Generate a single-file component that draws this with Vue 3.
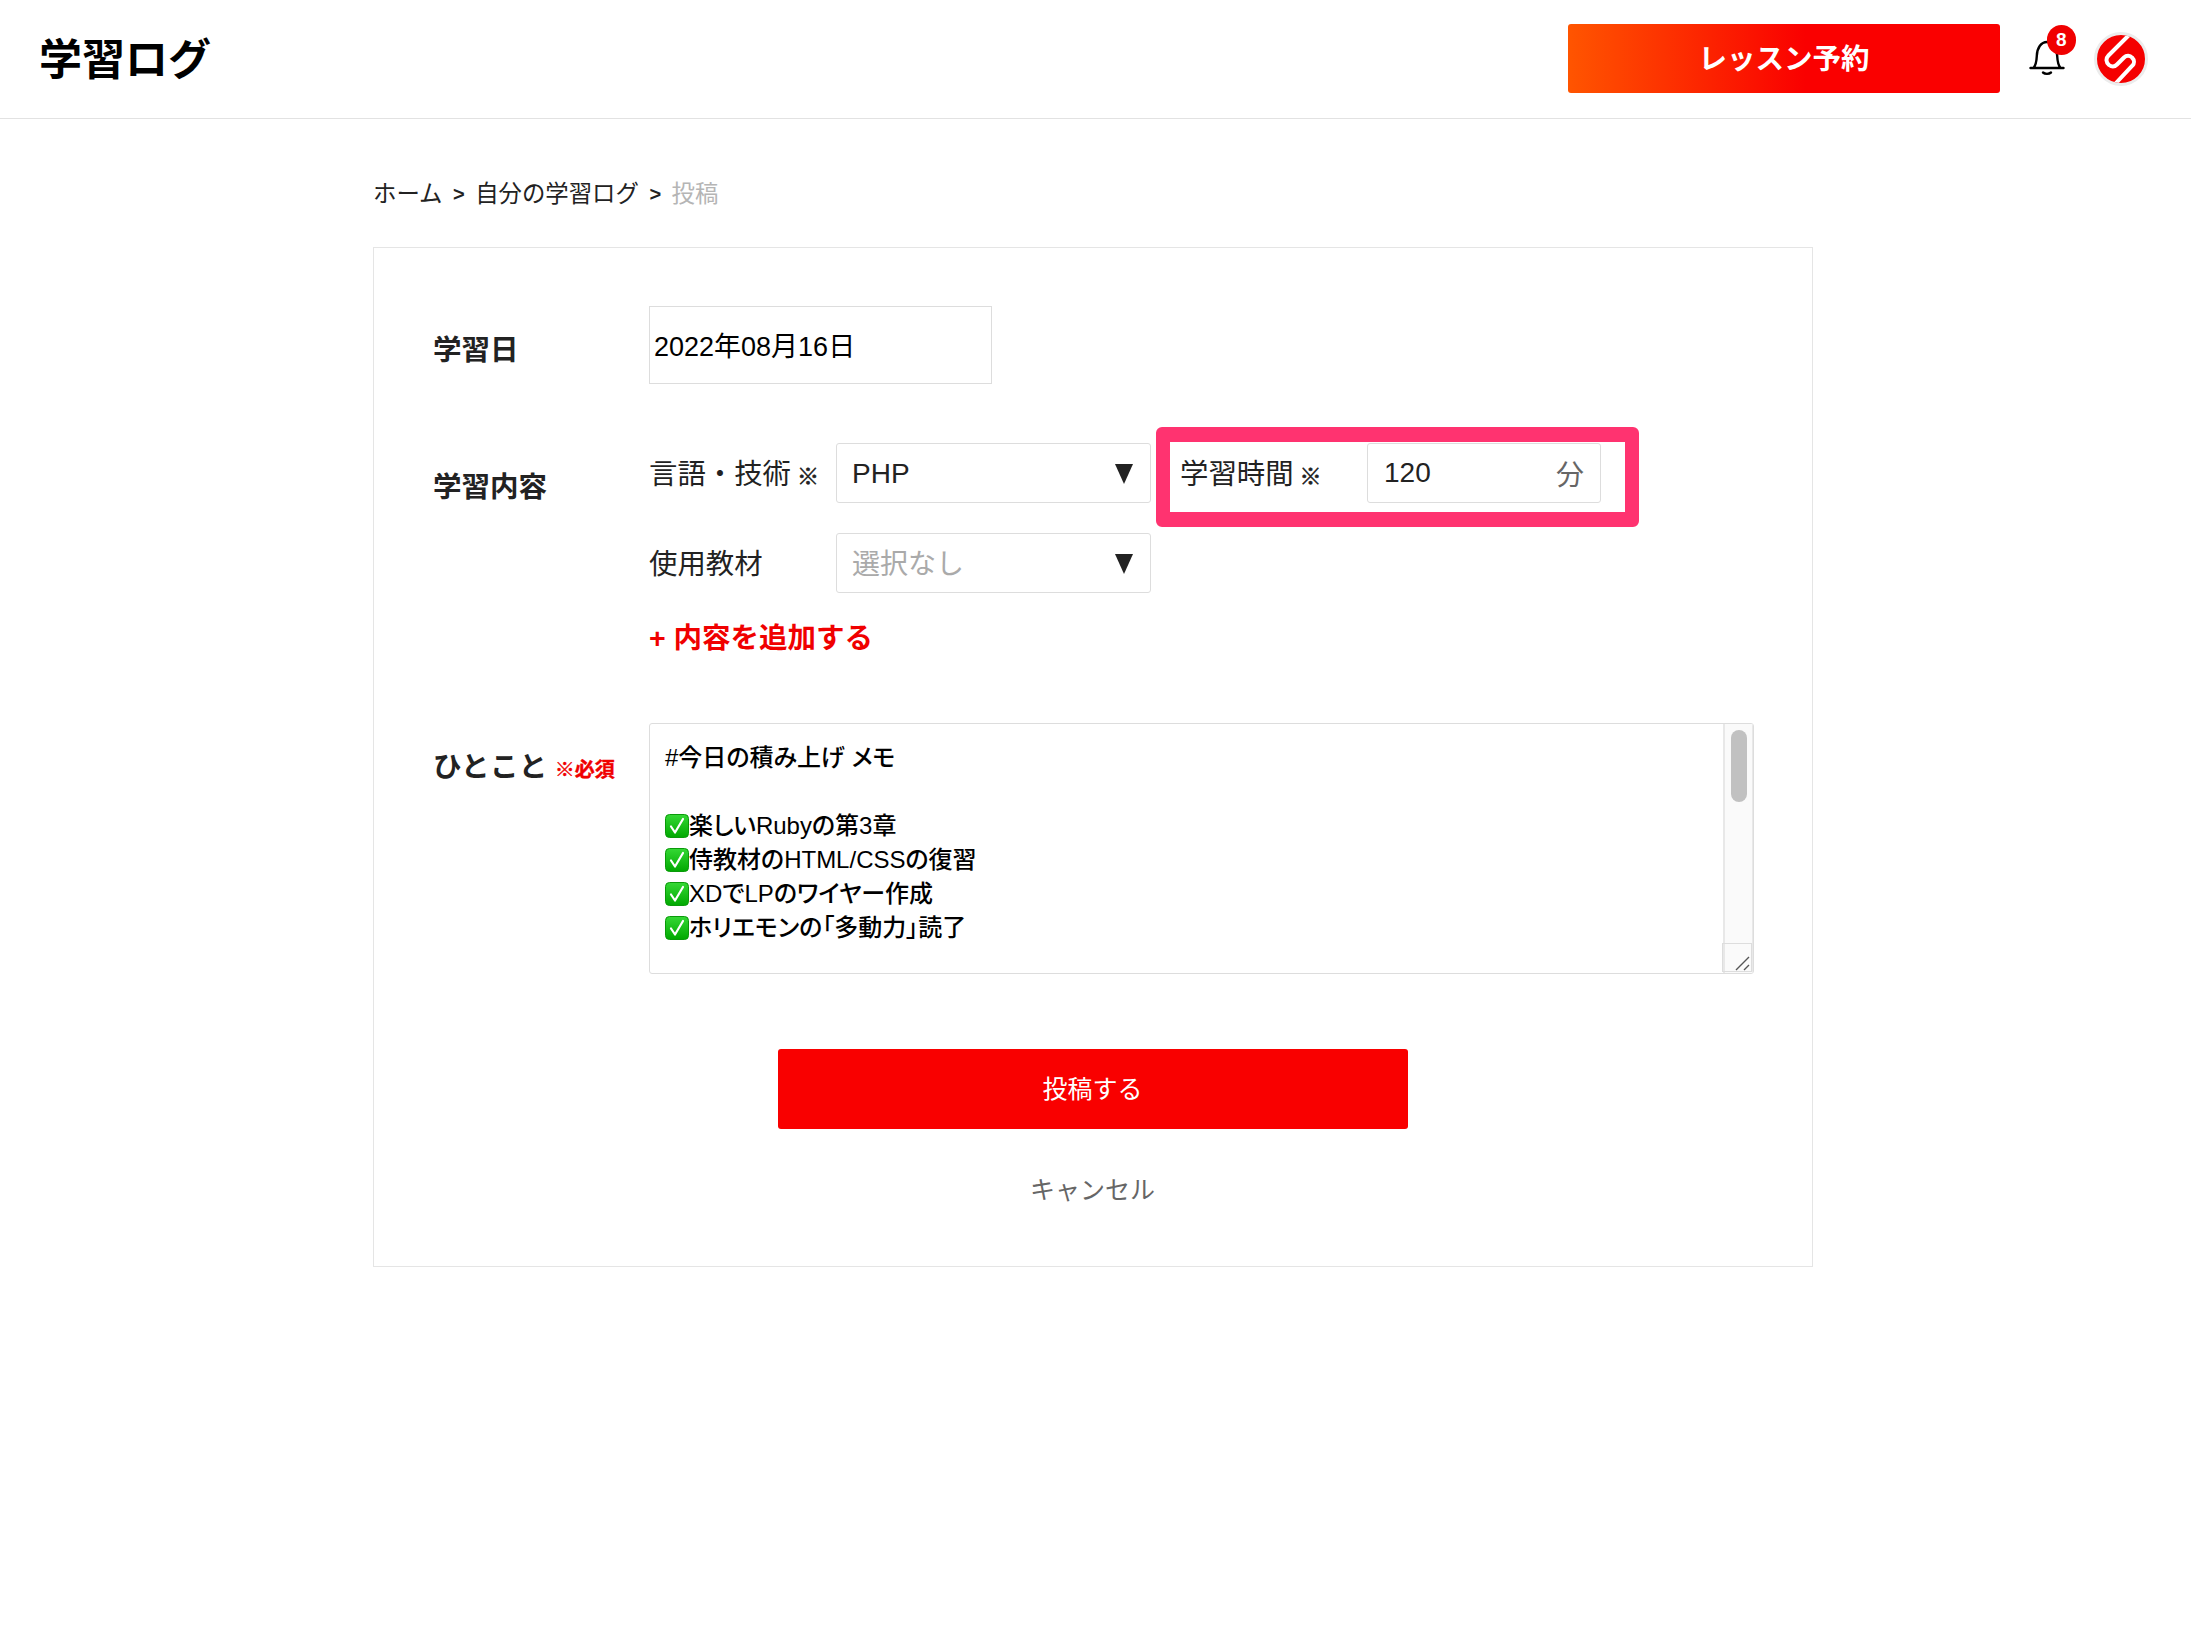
<script setup>
const lines = [
  '楽しいRubyの第3章',
  '侍教材のHTML/CSSの復習',
  'XDでLPのワイヤー作成',
  'ホリエモンの「多動力」読了',
]
</script>

<template>
  <div class="page">
    <header class="topbar">
      <h1 class="logo">学習ログ</h1>
      <div class="actions">
        <a class="reserve">レッスン予約</a>
        <div class="bell">
          <svg viewBox="0 0 36 36" width="36" height="36" fill="none" stroke="#000" stroke-width="2.4" stroke-linecap="round" stroke-linejoin="round">
            <path d="M1.500 28h33M4.500 28c2.500-3 3-6 3.300-12C8 8 12 2 18 2s10 6 10.200 14c.3 6 .8 9 3.300 12" />
            <path d="M14 32.500c2 1.800 6 1.800 8 0" />
          </svg>
          <span class="badge">8</span>
        </div>
        <div class="avatar">
          <svg viewBox="0 0 48 48" width="48" height="48" fill="none" stroke="#fff" stroke-width="4" stroke-linecap="round">
            <path d="M32 0 11.500 20.500c-3 3-2.500 7 .5 9.500 3 2.200 6 1.500 8-.5l7-7c2.500-2.500 6-2.200 8 0 2.500 2.500 2.500 6 .5 8L19 48" />
          </svg>
        </div>
      </div>
    </header>

    <main class="main">
      <nav class="crumbs">
        <span>ホーム</span><b>&gt;</b><span>自分の学習ログ</span><b>&gt;</b><span class="current">投稿</span>
      </nav>

      <section class="card">
        <div class="row row-date">
          <div class="label">学習日</div>
          <div class="date">2022年08月16日</div>
        </div>

        <div class="row row-content">
          <div class="label label-content">学習内容</div>
          <div class="content">
            <div class="line">
              <span class="field-name">言語・技術<small>※</small></span>
              <div class="select"><span>PHP</span><i class="arrow"></i></div>
              <span class="field-name time-name">学習時間<small>※</small></span>
              <div class="minutes"><span>120</span><span class="unit">分</span></div>
              <div class="highlight"></div>
            </div>
            <div class="line">
              <span class="field-name">使用教材</span>
              <div class="select"><span class="placeholder">選択なし</span><i class="arrow"></i></div>
            </div>
            <a class="add">+ 内容を追加する</a>
          </div>
        </div>

        <div class="row row-comment">
          <div class="label label-comment">ひとこと<em>※必須</em></div>
          <div class="textarea">
            <div class="text">
              <p>#今日の積み上げ メモ</p>
              <p>&nbsp;</p>
              <p v-for="line in lines" :key="line" class="check-line">
                <svg class="check" viewBox="0 0 24 24" width="24" height="24">
                  <defs>
                    <linearGradient id="g" x1="0" y1="0" x2="0" y2="1">
                      <stop offset="0" stop-color="#35d835" />
                      <stop offset="1" stop-color="#00a800" />
                    </linearGradient>
                  </defs>
                  <rect x="0.5" y="0.5" width="23" height="23" rx="4" fill="url(#g)" stroke="#0a9a0a" stroke-width="1" />
                  <path d="M6 12.500l4 6L18 5" fill="none" stroke="#fff" stroke-width="2.200" stroke-linecap="round" stroke-linejoin="round" />
                </svg>{{ line }}
              </p>
            </div>
            <div class="scrollbar">
              <div class="thumb"></div>
              <div class="resizer">
                <svg viewBox="0 0 16 16" width="16" height="16" stroke="#555" stroke-width="1.400" fill="none">
                  <path d="M1 15 14 2M9 15l5-5" />
                </svg>
              </div>
            </div>
          </div>
        </div>

        <div class="buttons">
          <a class="submit">投稿する</a>
          <a class="cancel">キャンセル</a>
        </div>
      </section>
    </main>
  </div>
</template>

<style>
html, body { margin: 0; background: #fff; }
</style>

<style scoped>
.page {
  min-height: 1628px;
  font-family: "Liberation Sans", "Noto Sans CJK JP", sans-serif;
  color: #222;
}
.topbar {
  box-sizing: content-box;
  height: 118px;
  border-bottom: 1px solid #e2e2e2;
  display: flex;
  align-items: center;
  justify-content: space-between;
  padding: 0 43px 0 39px;
}
.logo {
  margin: -6px 0 0;
  font-size: 43px;
  font-weight: 700;
  color: #000;
}
.actions { display: flex; align-items: center; }
.reserve {
  box-sizing: border-box;
  width: 432px;
  height: 69px;
  margin-top: -1px;
  padding-bottom: 5px;
  border-radius: 3px;
  background: linear-gradient(90deg, #ff5500 0%, #fa0000 55%, #fa0000 100%);
  color: #fff;
  font-size: 28.500px;
  font-weight: 700;
  display: flex;
  align-items: center;
  justify-content: center;
}
.bell {
  position: relative;
  width: 36px;
  height: 36px;
  margin-left: 29px;
  margin-top: -2px;
}
.bell svg { display: block; }
.badge {
  position: absolute;
  left: 17.500px;
  top: -15px;
  width: 29.500px;
  height: 29.500px;
  border-radius: 50%;
  background: #f00000;
  color: #fff;
  font-size: 19px;
  font-weight: 700;
  line-height: 29.500px;
  text-align: center;
}
.avatar {
  width: 48px;
  height: 48px;
  margin-left: 29px;
  border: 3px solid #ececec;
  border-radius: 50%;
  background: #f50000;
  overflow: hidden;
}
.avatar svg { display: block; }
.main { padding: 0 0 0 373px; width: 1440px; }
.crumbs {
  box-sizing: border-box;
  height: 128px;
  padding-top: 18px;
  display: flex;
  align-items: center;
  font-size: 23.400px;
}
.crumbs b { margin: 4px 10.500px 0; font-weight: 700; font-size: 20px; }
.current { color: #b5b5b5; }
.card {
  box-sizing: border-box;
  height: 1020px;
  border: 1px solid #e5e5e5;
  padding: 58px 58px 0 59px;
}
.row { display: flex; }
.label {
  width: 216px;
  flex: none;
  font-size: 28.500px;
  font-weight: 700;
  color: #222;
}
.row-date .label { padding-top: 21px; }
.date {
  box-sizing: border-box;
  width: 343px;
  height: 78px;
  border: 1px solid #ddd;
  color: #000;
  font-size: 27px;
  padding: 1px 4px 0;
  line-height: 78px;
  white-space: nowrap;
}
.row-content { margin-top: 59px; }
.label-content { padding-top: 21px; }
.content { flex: 1; }
.line {
  position: relative;
  display: flex;
  align-items: center;
  height: 60px;
  margin-bottom: 30px;
}
.field-name {
  width: 187px;
  flex: none;
  font-size: 28.400px;
  white-space: nowrap;
  margin-top: -4px;
}
.field-name small {
  font-size: 22px;
  font-weight: 700;
  margin-left: 6px;
  -webkit-text-stroke: 0.6px #222;
}
.select {
  box-sizing: border-box;
  width: 315px;
  height: 60px;
  border: 1px solid #ddd;
  border-radius: 3px;
  font-size: 28px;
  display: flex;
  align-items: center;
  justify-content: space-between;
  padding: 1px 17px 0 15px;
}
.placeholder { color: #aaa; margin-top: -4px; }
.arrow {
  width: 0;
  height: 0;
  border-left: 9px solid transparent;
  border-right: 9px solid transparent;
  border-top: 20px solid #222;
}
.time-name { width: 187px; margin-left: 29px; }
.minutes {
  box-sizing: border-box;
  width: 234px;
  height: 60px;
  border: 1px solid #ddd;
  border-radius: 3px;
  font-size: 28px;
  display: flex;
  align-items: center;
  justify-content: space-between;
  padding: 0 16px;
}
.unit { color: #666; }
.highlight {
  position: absolute;
  left: 507px;
  top: -16px;
  box-sizing: border-box;
  width: 483px;
  height: 100px;
  border: solid #ff3370;
  border-width: 15px 14px;
  border-radius: 6px;
  pointer-events: none;
}
.add {
  display: block;
  color: #f00000;
  font-size: 28.500px;
  font-weight: 700;
  line-height: 40px;
  margin-top: -5px;
}
.row-comment { margin-top: 65px; }
.label-comment { padding-top: 21px; white-space: nowrap; letter-spacing: 0.4px; }
.label-comment em {
  font-style: normal;
  font-size: 20px;
  letter-spacing: 0;
  color: #f00000;
  margin-left: 7px;
  -webkit-text-stroke: 0.4px #f00000;
}
.textarea {
  box-sizing: border-box;
  position: relative;
  width: 1105px;
  height: 251px;
  border: 1px solid #ddd;
  border-radius: 3px;
  display: flex;
  overflow: hidden;
}
.text {
  flex: 1;
  padding: 17px 0 0 15px;
  font-size: 24px;
  font-weight: 500;
  font-feature-settings: "palt";
  line-height: 34px;
  color: #000;
  white-space: nowrap;
}
.text p { margin: 0; }
.check-line { display: flex; align-items: center; }
.check { flex: none; }
.scrollbar {
  position: relative;
  flex: none;
  box-sizing: border-box;
  width: 30px;
  background: #fafafa;
  border-left: 2px solid #e8e8e8;
  border-right: 1px solid #e8e8e8;
}
.thumb {
  position: absolute;
  left: 6px;
  top: 6px;
  width: 16px;
  height: 72px;
  border-radius: 8px;
  background: #c1c1c1;
}
.resizer {
  position: absolute;
  right: 0;
  bottom: 1px;
  box-sizing: border-box;
  width: 30px;
  height: 29px;
  border: 1px solid #ddd;
  display: flex;
  align-items: flex-end;
  justify-content: flex-end;
}
.resizer svg { display: block; }
.buttons {
  display: flex;
  flex-direction: column;
  align-items: center;
  margin-top: 75px;
  padding-right: 2px;
}
.submit {
  box-sizing: border-box;
  width: 630px;
  height: 80px;
  padding-bottom: 5px;
  border-radius: 3px;
  background: #f90000;
  color: #fff;
  font-size: 25px;
  display: flex;
  align-items: center;
  justify-content: center;
}
.cancel {
  margin-top: 43px;
  font-size: 25px;
  color: #666;
  line-height: 36px;
}
</style>
